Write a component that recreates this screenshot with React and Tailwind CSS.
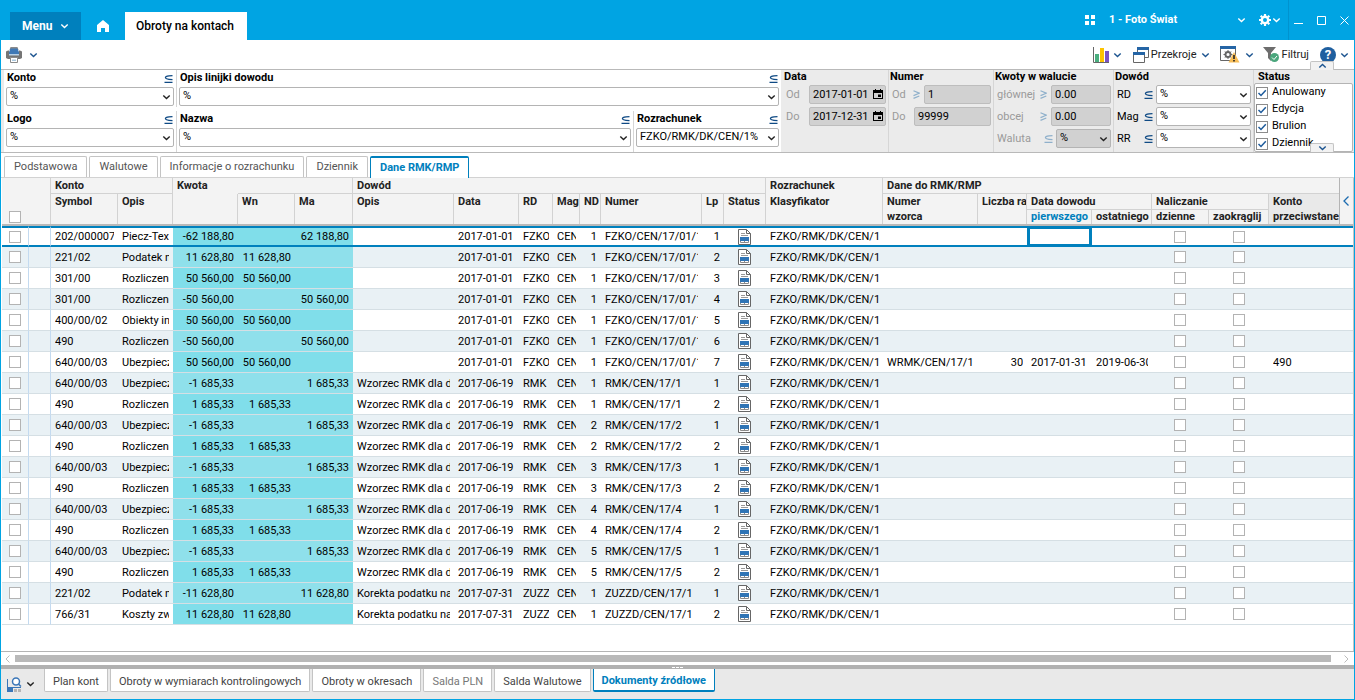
import clsx from "clsx";

const ROWS = [
  ["202/000007", "Piecz-Tex", "-62 188,80", "", "62 188,80", "", "2017-01-01", "FZKO", 1, "FZKO/CEN/17/01/1", 1],
  ["221/02", "Podatek n", "11 628,80", "11 628,80", "", "", "2017-01-01", "FZKO", 1, "FZKO/CEN/17/01/1", 2],
  ["301/00", "Rozliczeni", "50 560,00", "50 560,00", "", "", "2017-01-01", "FZKO", 1, "FZKO/CEN/17/01/1", 3],
  ["301/00", "Rozliczeni", "-50 560,00", "", "50 560,00", "", "2017-01-01", "FZKO", 1, "FZKO/CEN/17/01/1", 4],
  ["400/00/02", "Obiekty in", "50 560,00", "50 560,00", "", "", "2017-01-01", "FZKO", 1, "FZKO/CEN/17/01/1", 5],
  ["490", "Rozliczeni", "-50 560,00", "", "50 560,00", "", "2017-01-01", "FZKO", 1, "FZKO/CEN/17/01/1", 6],
  ["640/00/03", "Ubezpiecz", "50 560,00", "50 560,00", "", "", "2017-01-01", "FZKO", 1, "FZKO/CEN/17/01/1", 7],
  ["640/00/03", "Ubezpiecz", "-1 685,33", "", "1 685,33", "Wzorzec RMK dla d", "2017-06-19", "RMK", 1, "RMK/CEN/17/1", 1],
  ["490", "Rozliczeni", "1 685,33", "1 685,33", "", "Wzorzec RMK dla d", "2017-06-19", "RMK", 1, "RMK/CEN/17/1", 2],
  ["640/00/03", "Ubezpiecz", "-1 685,33", "", "1 685,33", "Wzorzec RMK dla d", "2017-06-19", "RMK", 2, "RMK/CEN/17/2", 1],
  ["490", "Rozliczeni", "1 685,33", "1 685,33", "", "Wzorzec RMK dla d", "2017-06-19", "RMK", 2, "RMK/CEN/17/2", 2],
  ["640/00/03", "Ubezpiecz", "-1 685,33", "", "1 685,33", "Wzorzec RMK dla d", "2017-06-19", "RMK", 3, "RMK/CEN/17/3", 1],
  ["490", "Rozliczeni", "1 685,33", "1 685,33", "", "Wzorzec RMK dla d", "2017-06-19", "RMK", 3, "RMK/CEN/17/3", 2],
  ["640/00/03", "Ubezpiecz", "-1 685,33", "", "1 685,33", "Wzorzec RMK dla d", "2017-06-19", "RMK", 4, "RMK/CEN/17/4", 1],
  ["490", "Rozliczeni", "1 685,33", "1 685,33", "", "Wzorzec RMK dla d", "2017-06-19", "RMK", 4, "RMK/CEN/17/4", 2],
  ["640/00/03", "Ubezpiecz", "-1 685,33", "", "1 685,33", "Wzorzec RMK dla d", "2017-06-19", "RMK", 5, "RMK/CEN/17/5", 1],
  ["490", "Rozliczeni", "1 685,33", "1 685,33", "", "Wzorzec RMK dla d", "2017-06-19", "RMK", 5, "RMK/CEN/17/5", 2],
  ["221/02", "Podatek n", "-11 628,80", "", "11 628,80", "Korekta podatku na", "2017-07-31", "ZUZZ", 1, "ZUZZD/CEN/17/1", 1],
  ["766/31", "Koszty zw", "11 628,80", "11 628,80", "", "Korekta podatku na", "2017-07-31", "ZUZZ", 1, "ZUZZD/CEN/17/1", 2],
];

// schedule data is filled in only for the row that has a template
const SCHEDULE = {
  6: { template: "WRMK/CEN/17/1", count: "30", first: "2017-01-31", last: "2019-06-30", account: "490" },
};

const VIEW_TABS = ["Podstawowa", "Walutowe", "Informacje o rozrachunku", "Dziennik", "Dane RMK/RMP"];
const BOTTOM_TABS = [
  "Plan kont",
  "Obroty w wymiarach kontrolingowych",
  "Obroty w okresach",
  "Salda PLN",
  "Salda Walutowe",
  "Dokumenty źródłowe",
];

const Chevron = ({ className, up }) => (
  <svg viewBox="0 0 9 6" className={clsx("h-[6px] w-[9px] shrink-0", className)} fill="none" stroke="currentColor" strokeWidth="1.4">
    <path d={up ? "M1.300 4.600 4.500 1.500 7.700 4.600" : "M1.300 1.400 4.500 4.500 7.700 1.400"} />
  </svg>
);

const Subset = ({ muted }) => (
  <svg
    viewBox="0 0 9 8"
    className={clsx("h-2 w-[9px] shrink-0", muted ? "text-[#8fb0cb]" : "text-[#0f4a84]")}
    fill="none"
    stroke="currentColor"
    strokeWidth="1.2"
  >
    <path d="M8.500.6 5 .9C.2 1.500.2 3.700 5 4.300L8.500 4.700M.5 7.400H8.500" />
  </svg>
);

const AtLeast = () => (
  <svg viewBox="0 0 7 9" className="h-[9px] w-[7px] shrink-0 text-[#8fb0cb]" fill="none" stroke="currentColor" strokeWidth="1.2">
    <path d="M.5.8 6.300 3.200.5 5.600M.5 8.400 6.300 6" />
  </svg>
);

const Select = ({ value, label, disabled, className }) => (
  <div className={clsx("relative", className)}>
    <select
      aria-label={label}
      disabled={disabled}
      defaultValue={value}
      className={clsx(
        "block h-[19px] w-full appearance-none rounded-xs border border-[#b4b4b4] pl-[3px] pr-4 text-[11px] text-black opacity-100",
        disabled ? "bg-[#d1d1d1]" : "bg-white"
      )}
    >
      <option>{value}</option>
    </select>
    <Chevron className="pointer-events-none absolute right-[3px] top-[7px] text-[#222]" />
  </div>
);

const Field = ({ label, value, className }) => (
  <div className={clsx("px-[2px]", className)}>
    <div className="flex h-[17px] items-center justify-between px-px">
      <span className="font-bold">{label}</span>
      <Subset />
    </div>
    <Select value={value} label={label} />
  </div>
);

const GrayInput = ({ value, label, className }) => (
  <input
    aria-label={label}
    disabled
    defaultValue={value}
    className={clsx("h-[19px] min-w-0 rounded-xs border border-[#bdbdbd] bg-[#d1d1d1] px-[3px] text-[11px] text-black", className)}
  />
);

const Group = ({ title, className, children }) => (
  <div role="group" aria-label={title} className={clsx("shrink-0 border-r border-[#d6d6d6] pl-px pr-[2px]", className)}>
    <div className="h-[15px] font-bold leading-[14px]">{title}</div>
    <div className="flex flex-col gap-[3px]">{children}</div>
  </div>
);

const Line = ({ label, muted, children }) => (
  <div className="flex h-[19px] items-center">
    <span className={clsx("flex-1 pl-[2px] pt-px", muted ? "text-[#9a9a9a]" : "text-black")}>{label}</span>
    {children}
  </div>
);

const DateInput = ({ value, label }) => (
  <div className="relative">
    <GrayInput value={value} label={label} className="w-[77px]" />
    <svg viewBox="0 0 10 11" className="absolute right-[3px] top-[4px] h-[11px] w-[10px]">
      <path d="M0 1H2V0H3V1H7V0H8V1H10V10H0ZM1 4V9H9V4ZM5 5.500H8V8H5Z" fillRule="evenodd" />
    </svg>
  </div>
);

const Check = ({ label }) => (
  <input
    type="checkbox"
    aria-label={label}
    className="block size-[12px] appearance-none border border-[#b3b3b3] bg-white"
  />
);

const StatusItem = ({ label }) => (
  <label className="flex h-[17px] items-center gap-1">
    <span className="relative size-[12px]">
      <input type="checkbox" defaultChecked className="block size-[12px] appearance-none border border-[#8c8c8c] bg-white" />
      <svg viewBox="0 0 12 12" className="pointer-events-none absolute inset-0" fill="none" stroke="#1f5c9c" strokeWidth="1.500">
        <path d="M2.500 6 5 8.500 9.800 3.300" />
      </svg>
    </span>
    {label}
  </label>
);

const DocIcon = () => (
  <svg viewBox="0 0 13 16" className="block h-[16px] w-[13px]" fill="none">
    <path d="M.5.5H8.500L12.500 4.500V15.500H.5Z" fill="#fff" stroke="#666" />
    <path d="M8.500.5V4.500H12.500" stroke="#666" />
    <path d="M3 4.500H7M3 6.500H10" stroke="#999" />
    <path d="M2.500 11V13.500H10.500V11M6.500 11V13.500" stroke="#8a8a8a" />
    <path d="M2 8H11V12H2Z" fill="#2f74b5" />
  </svg>
);

const PrinterIcon = () => (
  <svg viewBox="0 0 16 16" className="size-4">
    <path d="M4.500 0H11.500L12.500 3H3.500Z" fill="#8a8a8a" />
    <path d="M0 4.500 2 3.500H3V7H13V3.500H14L16 4.500V11L14 12H11V10H5V12H2L0 11Z" fill="#757575" />
    <path d="M4.500 1.500H11.500L13 5V7H3V5Z" fill="#3f78b5" />
    <path d="M3 7H13V8.500H3Z" fill="#b9d0e4" />
    <path d="M4.500 10.500H11.500V15.500H4.500Z" fill="#fff" stroke="#8a8a8a" />
    <path d="M6 12.500H10V14H6Z" fill="#a9c7de" />
  </svg>
);

const TopBar = () => (
  <header className="flex h-10 items-end bg-[#00a4e3] text-white">
    <button className="ml-[10px] flex h-7 w-[71px] items-center justify-between bg-[#0080bd] px-3 text-[12px] font-bold">
      Menu
      <Chevron />
    </button>
    <button aria-label="Start" className="flex h-7 w-11 items-center justify-center">
      <svg viewBox="0 0 12 12" className="size-3" fill="currentColor">
        <path d="M6 0 12 5V12H8V8H4V12H0V5Z" />
      </svg>
    </button>
    <a href="#" className="flex h-7 w-[122px] items-center bg-white pl-[11px] text-[12px] font-medium text-black">
      Obroty na kontach
    </a>
    <div className="ml-auto flex h-10 items-center">
      <svg viewBox="0 0 10 10" className="size-[10px]" fill="currentColor">
        <path d="M0 0H4V4H0ZM6 0H10V4H6ZM0 6H4V10H0ZM6 6H10V10H6Z" />
      </svg>
      <button className="ml-[14px] flex w-[137px] items-center justify-between text-[11px] font-bold">
        1 - Foto Świat
        <Chevron />
      </button>
      <button aria-label="Ustawienia" className="ml-[13px] flex items-center gap-px">
        <svg viewBox="0 0 12 12" className="size-3" fill="none" stroke="currentColor">
          <circle cx="6" cy="6" r="3.200" strokeWidth="2.400" />
          <path d="M6 0V2M6 10V12M0 6H2M10 6H12M1.700 1.700 3.200 3.200M8.800 8.800 10.300 10.300M1.700 10.300 3.200 8.800M8.800 3.200 10.300 1.700" strokeWidth="2.200" />
        </svg>
        <Chevron />
      </button>
      <div className="ml-[7px] flex h-10 items-center gap-[14px] border-l border-[#0093cf] pl-[5px] pr-[6px]">
        <button aria-label="Minimalizuj">
          <svg viewBox="0 0 9 9" className="size-[9px]" stroke="currentColor"><path d="M0 7.500H9" /></svg>
        </button>
        <button aria-label="Maksymalizuj">
          <svg viewBox="0 0 9 9" className="size-[9px]" fill="none" stroke="currentColor"><path d="M.5.5H8.500V8.500H.5Z" /></svg>
        </button>
        <button aria-label="Zamknij">
          <svg viewBox="0 0 9 9" className="size-[9px]" stroke="currentColor"><path d="M.5.5 8.500 8.500M8.500.5.5 8.500" /></svg>
        </button>
      </div>
    </div>
  </header>
);

const Toolbar = () => (
  <div className="flex h-[30px] items-center border-b border-[#b9b9b9] px-[5px] text-[11px] text-[#222]">
    <button aria-label="Drukuj" className="flex items-center gap-[7px] text-[#1c5490]">
      <PrinterIcon />
      <Chevron />
    </button>
    <div className="ml-auto flex items-center">
      <button aria-label="Wykres" className="flex items-center gap-1 text-[#1c5490]">
        <svg viewBox="0 0 16 16" className="size-4">
          <path d="M.5 0V15.500H16" fill="none" stroke="#666" />
          <path d="M2 7H6V15H2Z" fill="#4aae7f" />
          <path d="M7 1H11V15H7Z" fill="#fdc300" />
          <path d="M12 4H16V15H12Z" fill="#7a52c4" />
        </svg>
        <Chevron />
      </button>
      <button className="ml-[11px] flex items-center gap-[2px]">
        <svg viewBox="0 0 16 16" className="size-4" fill="#fff" stroke="#666">
          <path d="M4.500 1.500H15.500V10.500H4.500Z" />
          <path d="M4 0H16V3H4Z" fill="#2565a5" stroke="none" />
          <path d="M.5 7.500H11.500V15.500H.5Z" />
          <path d="M0 5H12V8H0Z" fill="#2565a5" stroke="none" />
        </svg>
        <span className="pt-[2px]">Przekroje</span>
        <Chevron className="ml-[2px] text-[#1c5490]" />
      </button>
      <button aria-label="Konfiguracja" className="ml-[10px] flex items-center gap-[5px] text-[#1c5490]">
        <svg viewBox="0 0 20 17" className="h-[17px] w-5">
          <path d="M.5.5H15.500V14.500H.5Z" fill="#fff" stroke="#666" />
          <path d="M0 0H16V3H0Z" fill="#2565a5" />
          <circle cx="8" cy="8.500" r="2.500" fill="none" stroke="#666" strokeWidth="2" />
          <path d="M8 4V13M3.500 8.500H12.500M5 5.500 11 11.500M11 5.500 5 11.500" stroke="#666" />
          <circle cx="8" cy="8.500" r="1.500" fill="#fff" />
          <path d="M14 6 19.500 16.500H8.500Z" fill="#f8bd56" />
          <path d="M14 9V13M14 14V15.500" stroke="#222" strokeWidth="1.600" />
        </svg>
        <Chevron />
      </button>
      <button className="ml-[9px] flex items-center gap-[3px]">
        <svg viewBox="0 0 16 15" className="h-[15px] w-4">
          <path d="M0 0H13L8 6V14L5 11V6Z" fill="#6d6d6d" />
          <circle cx="11.500" cy="10.500" r="4.500" fill="#4aa67c" />
          <path d="M9 10.500 11 12.500 14 9" fill="none" stroke="#fff" />
        </svg>
        <span className="pt-[2px]">Filtruj</span>
      </button>
      <button aria-label="Pomoc" className="ml-[11px] flex items-center gap-1 text-[#1c5490]">
        <span className="flex size-4 items-center justify-center rounded-full bg-[#1f5f9f] text-[13px] font-bold text-white">?</span>
        <Chevron />
      </button>
    </div>
  </div>
);

const Filters = () => (
  <section className="relative flex h-[83px] border-b border-[#b9b9b9] bg-[#ebebeb] text-[11px] text-black">
    <div className="ml-[3px] mr-[2px] flex flex-1 flex-col gap-1 bg-white">
      <div className="flex h-[37px]">
        <Field label="Konto" value="%" className="w-[173px] border-r border-[#d6d6d6]" />
        <Field label="Opis linijki dowodu" value="%" className="flex-1" />
      </div>
      <div className="flex h-[41px]">
        <Field label="Logo" value="%" className="w-[173px] border-r border-[#d6d6d6]" />
        <Field label="Nazwa" value="%" className="flex-1 border-r border-[#d6d6d6]" />
        <Field label="Rozrachunek" value="FZKO/RMK/DK/CEN/1%" className="w-[147px]" />
      </div>
    </div>
    <Group title="Data" className="w-[106px]">
      <Line label="Od" muted><DateInput value="2017-01-01" label="Data od" /></Line>
      <Line label="Do" muted><DateInput value="2017-12-31" label="Data do" /></Line>
    </Group>
    <Group title="Numer" className="w-[105px]">
      <Line label="Od" muted>
        <AtLeast />
        <GrayInput value="1" label="Numer od" className="ml-1 w-[67px]" />
      </Line>
      <Line label="Do" muted><GrayInput value="99999" label="Numer do" className="w-[77px]" /></Line>
    </Group>
    <Group title="Kwoty w walucie" className="w-[120px]">
      <Line label="głównej" muted>
        <AtLeast />
        <GrayInput value="0.00" label="Kwota w walucie głównej" className="ml-1 w-[60px]" />
      </Line>
      <Line label="obcej" muted>
        <AtLeast />
        <GrayInput value="0.00" label="Kwota w walucie obcej" className="ml-1 w-[60px]" />
      </Line>
      <Line label="Waluta" muted>
        <Subset muted />
        <Select value="%" label="Waluta" disabled className="ml-[3px] w-[55px]" />
      </Line>
    </Group>
    <Group title="Dowód" className="w-[140px]">
      {["RD", "Mag", "RR"].map((name) => (
        <Line key={name} label={name}>
          <Subset />
          <Select value="%" label={name} className="ml-[3px] w-[95px]" />
        </Line>
      ))}
    </Group>
    <div className="w-[100px]">
      <div className="h-[13px] pl-1 font-bold leading-[14px]">Status</div>
      <div className="h-[69px] w-[99px] overflow-hidden rounded-xs border border-[#b4b4b4] bg-white pl-px">
        {["Anulowany", "Edycja", "Brulion", "Dziennik"].map((s) => (
          <StatusItem key={s} label={s} />
        ))}
      </div>
    </div>
    <button aria-label="Zwiń filtry" className="absolute -top-[9px] right-[20px] flex h-[9px] w-6 items-center justify-center rounded-t-xs border border-b-0 border-[#c4c4c4] bg-[#f2f2f2] text-[#1c5490]">
      <Chevron up />
    </button>
    <button aria-label="Rozwiń filtry" className="absolute bottom-0 right-[20px] flex h-[9px] w-6 items-center justify-center rounded-t-xs border border-b-0 border-[#c4c4c4] bg-[#f2f2f2] text-[#1c5490]">
      <Chevron />
    </button>
  </section>
);

const Th = ({ children, className, ...rest }) => (
  <th
    className={clsx("overflow-hidden whitespace-nowrap border-[#d2d2d2] pl-1 text-left align-top font-bold", className)}
    {...rest}
  >
    {children}
  </th>
);

const Td = ({ children, className, right }) => (
  <td className={clsx("px-1", right && "text-right", className)}>
    <div className="overflow-hidden whitespace-nowrap">{children}</div>
  </td>
);

const TableHead = () => (
  <thead className="bg-[#f3f3f3] leading-[15px] text-[#222]">
    <tr className="h-4">
      <Th colSpan={2} rowSpan={3} className="border-r pl-[7px]">
        <div className="flex h-[45px] items-end"><Check label="Zaznacz wszystkie" /></div>
      </Th>
      <Th colSpan={2} className="border-b border-r">Konto</Th>
      <Th>Kwota</Th>
      <Th colSpan={2} className="border-b border-r" />
      <Th colSpan={8} className="border-b border-r">Dowód</Th>
      <Th className="border-r">Rozrachunek</Th>
      <Th colSpan={7} className="border-b">Dane do RMK/RMP</Th>
      <Th rowSpan={3} className="border-l border-l-[#b4b4b4] pl-[3px]!">
        <button aria-label="Pokaż panel" className="mt-[18px] block text-[#1c6cb0]">
          <svg viewBox="0 0 6 10" className="h-[10px] w-[6px]" fill="none" stroke="currentColor" strokeWidth="1.300"><path d="M5.500.5 1 5 5.500 9.500" /></svg>
        </button>
      </Th>
    </tr>
    <tr className="h-4">
      <Th rowSpan={2} className="border-r">Symbol</Th>
      <Th rowSpan={2} className="border-r">Opis</Th>
      <Th rowSpan={2} className="border-r" />
      <Th rowSpan={2} className="border-r">Wn</Th>
      <Th rowSpan={2} className="border-r">Ma</Th>
      <Th rowSpan={2} className="border-r">Opis</Th>
      <Th rowSpan={2} className="border-r">Data</Th>
      <Th rowSpan={2} className="border-r">RD</Th>
      <Th rowSpan={2} className="border-r">Mag</Th>
      <Th rowSpan={2} className="border-r">ND</Th>
      <Th rowSpan={2} className="border-r">Numer</Th>
      <Th rowSpan={2} className="border-r">Lp</Th>
      <Th rowSpan={2} className="border-r">Status</Th>
      <Th rowSpan={2} className="border-r">Klasyfikator</Th>
      <Th rowSpan={2} className="border-r">Numer<br />wzorca</Th>
      <Th rowSpan={2} className="border-r">Liczba ra</Th>
      <Th colSpan={2} className="border-b border-r">Data dowodu</Th>
      <Th colSpan={2} className="border-b border-r">Naliczanie</Th>
      <Th rowSpan={2} className="bg-[#e9e9e9]">Konto<br />przeciwstane</Th>
    </tr>
    <tr className="h-[14px] leading-[14px]">
      <Th className="border-r text-[#0080bd]">pierwszego</Th>
      <Th className="border-r">ostatniego</Th>
      <Th className="border-r">dzienne</Th>
      <Th className="border-r">zaokrąglij</Th>
    </tr>
    <tr className="h-[2px] bg-[#b9b9b9]"><td colSpan={24} /></tr>
  </thead>
);

const DataRow = ({ row, index }) => {
  const [symbol, name, amount, debit, credit, desc, date, rd, nd, number, lp] = row;
  const plan = SCHEDULE[index] ?? {};
  const active = index === 0;
  const money = index % 2 ? "bg-[#8fe0eb]" : "bg-[#80deea]";

  return (
    <tr
      className={clsx(
        "h-[21px]",
        active ? "[&>td]:border-y-2 [&>td]:border-y-[#0080bd]" : "[&>td]:border-b [&>td]:border-b-[#d5dfe4]",
        index % 2 ? "bg-[#e9f1f5]" : "bg-white"
      )}
    >
      <td className="pl-[7px]"><Check label={`Zaznacz ${symbol}`} /></td>
      <td className="border-x border-x-[#c3daf0]" />
      <Td>{symbol}</Td>
      <Td>{name}</Td>
      <Td right className={money}>{amount}</Td>
      <Td right className={money}>{debit}</Td>
      <Td right className={money}>{credit}</Td>
      <Td>{desc}</Td>
      <Td>{date}</Td>
      <Td>{rd}</Td>
      <Td>CEN</Td>
      <Td right>{nd}</Td>
      <Td>{number}</Td>
      <Td right>{lp}</Td>
      <td className="pl-[14px]"><DocIcon /></td>
      <Td>FZKO/RMK/DK/CEN/1</Td>
      <Td>{plan.template}</Td>
      <Td right>{plan.count}</Td>
      <Td className={active && "border-3! border-[#0080bd]"}>{plan.first}</Td>
      <Td>{plan.last}</Td>
      <td className="pl-[22px]"><Check label="Naliczanie dzienne" /></td>
      <td className="pl-6"><Check label="Naliczanie zaokrąglij" /></td>
      <Td>{plan.account}</Td>
      <td />
    </tr>
  );
};

const LedgerTable = () => (
  <table className="w-full table-fixed border-separate border-spacing-0 text-[11px] leading-[17px] text-black">
    <colgroup>
      <col className="w-[26px]" />
      <col className="w-[23px]" />
      <col className="w-[67px]" />
      <col className="w-[55px]" />
      <col className="w-[65px]" />
      <col className="w-[57px]" />
      <col className="w-[58px]" />
      <col className="w-[101px]" />
      <col className="w-[65px]" />
      <col className="w-[34px]" />
      <col className="w-[27px]" />
      <col className="w-[21px]" />
      <col className="w-[101px]" />
      <col className="w-[22px]" />
      <col className="w-[42px]" />
      <col className="w-[117px]" />
      <col className="w-[95px]" />
      <col className="w-[49px]" />
      <col className="w-[65px]" />
      <col className="w-[60px]" />
      <col className="w-[57px]" />
      <col className="w-[60px]" />
      <col />
      <col className="w-[14px]" />
    </colgroup>
    <TableHead />
    <tbody>
      {ROWS.map((row, index) => (
        <DataRow key={index} row={row} index={index} />
      ))}
    </tbody>
  </table>
);

const BottomBar = () => (
  <footer className="flex h-[30px] items-start bg-[#e9e9e9] pl-[6px] text-[11px]">
    <button aria-label="Podgląd" className="flex h-[30px] w-[37px] items-center gap-1 text-[#222]">
      <svg viewBox="0 0 15 15" className="size-[15px]" fill="none">
        <path d="M.5 2V15M0 10.500H14" stroke="#3a76b8" />
        <path d="M0 11H6V15H0Z" fill="#3a76b8" />
        <path d="M7 12H10V15H7ZM11 12H14V15H11Z" fill="#b5b5b5" />
        <circle cx="9" cy="4.500" r="3.500" fill="#fff" stroke="#3a76b8" strokeWidth="1.500" />
        <path d="M11.500 7 14 9.500" stroke="#3a76b8" strokeWidth="1.500" />
      </svg>
      <Chevron />
    </button>
    <nav className="flex gap-[2px]">
      {BOTTOM_TABS.map((tab) => (
        <button
          key={tab}
          className={clsx(
            "h-[23px] rounded-b-xs border border-t-0 bg-white px-2 pt-1",
            tab === "Dokumenty źródłowe"
              ? "border-b-2 border-[#0080bd] font-bold text-[#0080bd]"
              : "border-[#c4c4c4]",
            tab === "Salda PLN" && "text-[#777]",
            tab !== "Salda PLN" && tab !== "Dokumenty źródłowe" && "text-[#444]"
          )}
        >
          {tab}
        </button>
      ))}
    </nav>
  </footer>
);

const App = () => {
  return (
    <div className="flex min-h-screen flex-col bg-white font-[Roboto,sans-serif]">
      <TopBar />
      <main className="flex flex-1 flex-col border-x border-b border-[#00a4e3]">
        <Toolbar />
        <Filters />

        {/* View tabs */}
        <nav className="flex h-[25px] items-end gap-[2px] border-b border-[#d2d2d2] pl-[3px] text-[11px]">
          {VIEW_TABS.map((tab) => (
            <button
              key={tab}
              className={clsx(
                "rounded-t-xs border border-b-0 bg-white px-[9px]",
                tab === "Dane RMK/RMP"
                  ? "-mb-px h-[22px] border-t-2 border-[#0080bd] font-bold text-[#0080bd]"
                  : "h-[21px] border-[#c4c4c4] pt-px text-[#555]"
              )}
            >
              {tab}
            </button>
          ))}
        </nav>

        <div className="ml-px flex-1 border-r border-[#c4c4c4]">
          <LedgerTable />
        </div>

        {/* Horizontal scrollbar and splitter */}
        <div className="flex h-[14px] items-center gap-[5px] border-t border-[#b4b4b4] pl-1 pr-[5px] text-[#bbb]">
          <svg viewBox="0 0 5 8" className="h-2 w-[5px]" fill="none" stroke="currentColor"><path d="M4.500.5 1 4 4.500 7.500" /></svg>
          <div className="mr-2 h-[7px] flex-1 bg-[#b9b9b9]" />
          <svg viewBox="0 0 5 8" className="h-2 w-[5px]" fill="none" stroke="currentColor"><path d="M.5.5 4 4 .5 7.500" /></svg>
        </div>
        <div className="flex h-1 items-center justify-center gap-px bg-[#b1b1b1]">
          <span className="h-px w-[3px] bg-white" />
          <span className="h-px w-[3px] bg-white" />
          <span className="h-px w-[3px] bg-white" />
        </div>
        <BottomBar />
      </main>
    </div>
  );
};

export default App;
